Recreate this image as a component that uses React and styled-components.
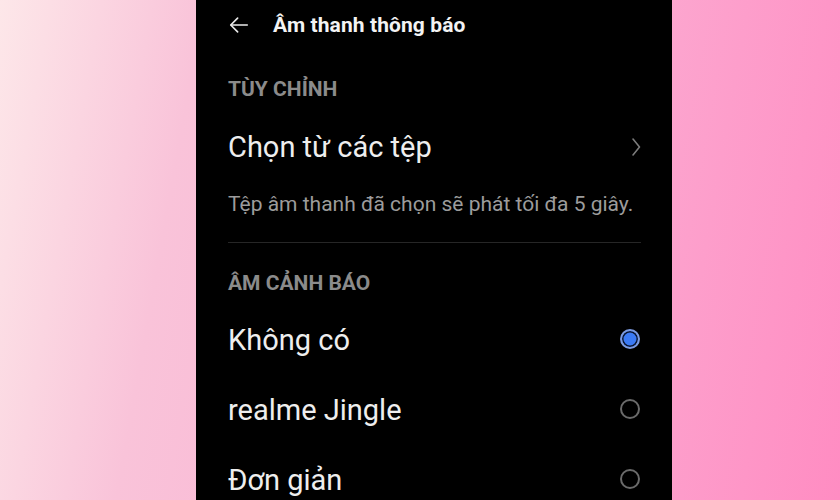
import React from 'react';
import styled, { createGlobalStyle } from 'styled-components';

const GlobalStyle = createGlobalStyle`
  html, body {
    margin: 0;
    padding: 0;
    height: 100%;
  }
  body {
    font-family: Roboto, "Noto Sans", "Liberation Sans", sans-serif;
    background: #fff;
  }
  #root {
    height: 100%;
  }
`;

const Page = styled.div`
  width: 840px;
  height: 500px;
  overflow: hidden;
  box-sizing: border-box;
  padding-left: 196px;
  display: flex;
  background: linear-gradient(100deg, #fde7e9 0%, #f9c3d9 22%, #fca8d0 70%, #ff8cc2 100%);
`;

const Phone = styled.div`
  width: 476px;
  height: 500px;
  background: #000;
  padding: 0 31px 0 32px;
  box-sizing: border-box;
  display: flex;
  flex-direction: column;
`;

const Header = styled.div`
  height: 50px;
  display: flex;
  align-items: center;
  gap: 23px;
  flex-shrink: 0;
`;

const BackButton = styled.button`
  background: none;
  border: none;
  padding: 0;
  width: 22px;
  height: 22px;
  display: flex;
  align-items: center;
  justify-content: center;
  color: #eaeaea;
  cursor: pointer;
`;

const Title = styled.h1`
  margin: 0;
  font-size: 21px;
  font-weight: 700;
  color: #f3f3f3;
  letter-spacing: 0.1px;
`;

const SectionLabel = styled.div`
  margin-top: ${({ $top }) => $top}px;
  line-height: 24px;
  font-size: 21px;
  font-weight: 700;
  color: #8b8b8b;
  flex-shrink: 0;
`;

const NavRow = styled.div`
  margin-top: 18px;
  height: 56px;
  display: flex;
  align-items: center;
  justify-content: space-between;
  flex-shrink: 0;
  cursor: pointer;
`;

const ItemText = styled.span`
  font-size: 29px;
  line-height: 34px;
  color: #eeeeee;
`;

const Hint = styled.p`
  margin: 18px 0 0;
  line-height: 22px;
  font-size: 21px;
  color: #9c9c9c;
  flex-shrink: 0;
`;

const Divider = styled.hr`
  margin: 27px 0 0;
  border: none;
  height: 1px;
  background: #262626;
  flex-shrink: 0;
`;

const OptionList = styled.div`
  margin-top: 10px;
  display: flex;
  flex-direction: column;
`;

const OptionRow = styled.label`
  height: 70px;
  display: flex;
  align-items: center;
  justify-content: space-between;
  flex-shrink: 0;
  cursor: pointer;
`;

const Radio = styled.span`
  width: 20px;
  height: 20px;
  margin: 0 1px 2px 0;
  box-sizing: border-box;
  border-radius: 50%;
  border: 2px solid ${({ $checked }) => ($checked ? '#7d9be0' : '#6b6b6b')};
  background: ${({ $checked }) => ($checked ? '#3b7af5' : 'transparent')};
  box-shadow: ${({ $checked }) => ($checked ? 'inset 0 0 0 1.5px #0b1530' : 'none')};
  flex-shrink: 0;
`;

const ArrowLeft = () => (
  <svg width="22" height="22" viewBox="0 0 24 24" fill="none" stroke="currentColor" strokeWidth="1.8" strokeLinecap="round" strokeLinejoin="round">
    <path d="M21 12H3.5" />
    <path d="M10.5 4.5L3 12l7.5 7.5" />
  </svg>
);

const Chevron = () => (
  <svg width="10" height="20" viewBox="0 0 10 20" fill="none" stroke="#7c7c7c" strokeWidth="1.6" strokeLinecap="round" strokeLinejoin="round">
    <path d="M2 2l6.5 8L2 18" />
  </svg>
);

const options = [
  { name: 'Không có', checked: true },
  { name: 'realme Jingle', checked: false },
  { name: 'Đơn giản', checked: false },
];

const App = () => {
  return (
    <>
      <GlobalStyle />
      <Page>
        <Phone>
          <Header>
            <BackButton aria-label="Quay lại">
              <ArrowLeft />
            </BackButton>
            <Title>Âm thanh thông báo</Title>
          </Header>

          <SectionLabel $top={27}>TÙY CHỈNH</SectionLabel>
          <NavRow>
            <ItemText>Chọn từ các tệp</ItemText>
            <Chevron />
          </NavRow>
          <Hint>Tệp âm thanh đã chọn sẽ phát tối đa 5 giây.</Hint>
          <Divider />

          <SectionLabel $top={28}>ÂM CẢNH BÁO</SectionLabel>
          <OptionList>
            {options.map((opt) => (
              <OptionRow key={opt.name}>
                <ItemText>{opt.name}</ItemText>
                <Radio $checked={opt.checked} />
              </OptionRow>
            ))}
          </OptionList>
        </Phone>
      </Page>
    </>
  );
};

export default App;
